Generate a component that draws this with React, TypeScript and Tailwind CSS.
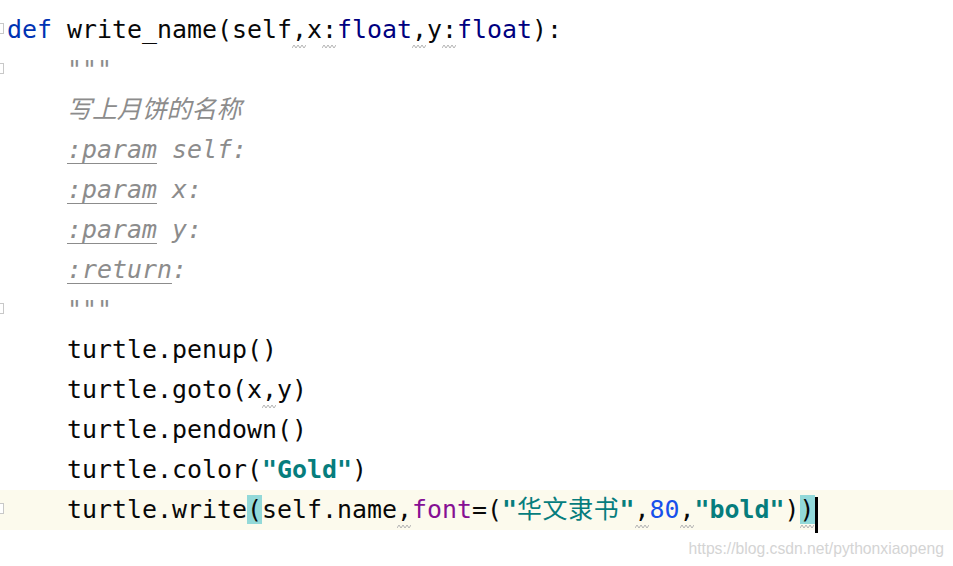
import React from 'react';

const mono = { fontFamily: '"DejaVu Sans Mono", "Liberation Mono", "Noto Sans CJK SC", monospace' };

// tiny gray wavy underline the IDE puts under weak warnings
function Warn({ children }: { children: React.ReactNode }) {
  return (
    <span className="relative">
      {children}
      <svg className="absolute left-0 top-[29px]" width="14" height="5" viewBox="0 0 14 5">
        <path d="M0 4 L2 1 L4 4 L6 1 L8 4 L10 1 L12 4 L14 1" fill="none" stroke="#b4b4b4" strokeWidth="1" />
      </svg>
    </span>
  );
}

function Fold() {
  return <div className="mt-[13px] h-[11px] w-[4px] border-y border-r border-[#c8c8c8] bg-white" />;
}

function Line({ fold, current, children }: { fold?: boolean; current?: boolean; children?: React.ReactNode }) {
  return (
    <div className={`flex h-10 ${current ? 'bg-[#fcfaed]' : ''}`}>
      <div className="w-[7px] shrink-0">{fold && <Fold />}</div>
      <div className="whitespace-pre leading-10 text-[#080808]">{children}</div>
    </div>
  );
}

const Doc = ({ children }: { children: React.ReactNode }) => (
  <span className="italic text-[#8c8c8c]">{children}</span>
);
const Tag = ({ children }: { children: React.ReactNode }) => (
  <span className="italic text-[#8c8c8c] underline decoration-1 underline-offset-[5px]">{children}</span>
);

export default function App() {
  return (
    <div className="relative h-[566px] w-[953px] overflow-hidden bg-white pt-[10px]">
      <div className="text-[24.92px]" style={mono}>
        <Line fold>
          <span className="text-[#0033b3]">def</span> write_name(self<Warn>,</Warn>x<Warn>:</Warn>
          <span className="text-[#000080]">float</span><Warn>,</Warn>y<Warn>:</Warn>
          <span className="text-[#000080]">float</span>):
        </Line>
        <Line fold>
          {'    '}<Doc>"""</Doc>
        </Line>
        <Line>
          {'    '}<Doc>写上月饼的名称</Doc>
        </Line>
        <Line>
          {'    '}<Tag>:param</Tag><Doc> self:</Doc>
        </Line>
        <Line>
          {'    '}<Tag>:param</Tag><Doc> x:</Doc>
        </Line>
        <Line>
          {'    '}<Tag>:param</Tag><Doc> y:</Doc>
        </Line>
        <Line>
          {'    '}<Tag>:return</Tag><Doc>:</Doc>
        </Line>
        <Line fold>
          {'    '}<Doc>"""</Doc>
        </Line>
        <Line>{'    '}turtle.penup()</Line>
        <Line>
          {'    '}turtle.goto(x<Warn>,</Warn>y)
        </Line>
        <Line>{'    '}turtle.pendown()</Line>
        <Line>
          {'    '}turtle.color(<span className="font-bold text-[#067d7d]">"Gold"</span>)
        </Line>
        <Line fold current>
          {'    '}turtle.write<span className="bg-[#93d9d9]">(</span>self.name<Warn>,</Warn>
          <span className="text-[#871094]">font</span>=(
          <span className="font-bold text-[#067d7d]">
            "<span className="font-normal tracking-[0.75px]">华文隶书</span>"
          </span>
          <Warn>,</Warn>
          <span className="text-[#1750eb]">80</span>
          <Warn>,</Warn>
          <span className="font-bold text-[#067d7d]">"bold"</span>)
          <span className="relative bg-[#93d9d9]">
            <Warn>)</Warn>
            <span className="absolute right-[-3px] top-[2px] h-[36px] w-[3px] bg-black" />
          </span>
        </Line>
      </div>
      <div className="flex justify-end pr-[9px] pt-[9px]">
        <span
          className="text-[15.7px] leading-5 text-[#d4d4d4]"
          style={{ fontFamily: '"Liberation Sans", Arial, sans-serif' }}
        >
          https://blog.csdn.net/pythonxiaopeng
        </span>
      </div>
    </div>
  );
}
